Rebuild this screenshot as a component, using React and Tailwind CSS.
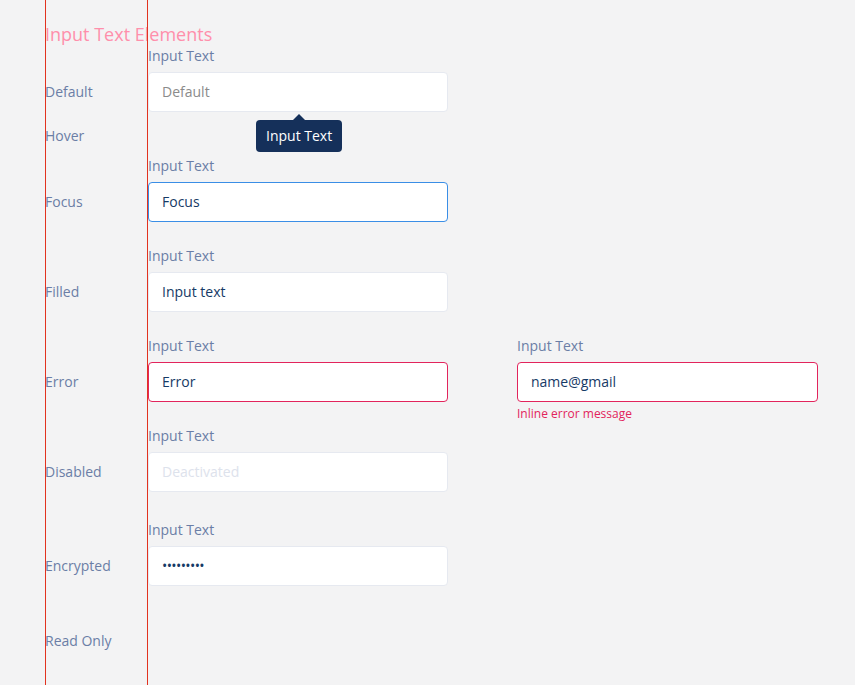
import React from 'react';

const font = { fontFamily: '"Open Sans", "Noto Sans", sans-serif' };

const Field = ({ label, value, state = 'default', width = 'w-[300px]' }) => {
  const box = {
    default: 'border-[#e6e9f0] text-[#8b8b8b]',
    focus: 'border-[#3a8ee6] text-[#163a66]',
    filled: 'border-[#e6e9f0] text-[#163a66]',
    error: 'border-[#e2245c] text-[#163a66]',
    disabled: 'border-[#e6e9f0] text-[#dde2ec]',
    encrypted: 'border-[#e6e9f0] text-[#163a66]'
  }[state];

  return (
    <div className={width}>
      <div className="h-5 text-sm leading-5 text-[#6b7ea6]">{label}</div>
      <div
        className={`mt-1.5 flex h-10 items-center rounded border bg-white px-[13px] text-sm ${box}`}
      >
        {state === 'encrypted' ? (
          <span className="text-sm tracking-[-0.6px]">•••••••••</span>
        ) : (
          value
        )}
      </div>
    </div>
  );
};

const RowLabel = ({ children }) => (
  <div className="flex h-10 items-center text-sm text-[#6b7ea6]">{children}</div>
);

const Row = ({ label, className = '', children }) => (
  <div className={`flex ${className}`}>
    <div className="w-[103px] shrink-0 pt-[26px]">
      <RowLabel>{label}</RowLabel>
    </div>
    {children}
  </div>
);

const App = () => {
  return (
    <div className="relative min-h-[685px] bg-[#f3f3f4] pl-[45px] pt-[22px]" style={font}>
      {/* guide lines */}
      <div className="pointer-events-none absolute left-[45px] top-0 h-full w-px bg-[#e2321f]" />
      <div className="pointer-events-none absolute left-[147px] top-0 h-full w-px bg-[#e2321f]" />

      <h1 className="h-6 text-lg leading-6 text-[#ff8fab]">Input Text Elements</h1>

      <Row label="Default">
        <Field label="Input Text" value="Default" />
      </Row>

      {/* Hover */}
      <div className="mt-2 flex">
        <div className="flex h-8 w-[103px] shrink-0 items-center text-sm text-[#6b7ea6]">Hover</div>
        <div className="relative ml-[108px] flex h-8 items-center rounded-sm bg-[#15305a] px-[10px] text-sm text-white">
          Input Text
          <span className="absolute left-1/2 top-[-6px] h-0 w-0 -translate-x-1/2 border-x-[6px] border-b-[6px] border-x-transparent border-b-[#15305a]" />
        </div>
      </div>

      <Row label="Focus" className="mt-1">
        <Field label="Input Text" value="Focus" state="focus" />
      </Row>

      <Row label="Filled" className="mt-6">
        <Field label="Input Text" value="Input text" state="filled" />
      </Row>

      <Row label="Error" className="mt-6">
        <div className="flex gap-[69px]">
          <Field label="Input Text" value="Error" state="error" />
          <div>
            <Field label="Input Text" value="name@gmail" state="error" width="w-[301px]" />
            <div className="mt-1 h-4 text-xs leading-4 text-[#e2245c]">Inline error message</div>
          </div>
        </div>
      </Row>

      <Row label="Disabled" className="mt-1">
        <Field label="Input Text" value="Deactivated" state="disabled" />
      </Row>

      <Row label="Encrypted" className="mt-7">
        <Field label="Input Text" state="encrypted" />
      </Row>

      <div className="mt-[45px] h-5 text-sm leading-5 text-[#6b7ea6]">Read Only</div>
    </div>
  );
};

export default App;
